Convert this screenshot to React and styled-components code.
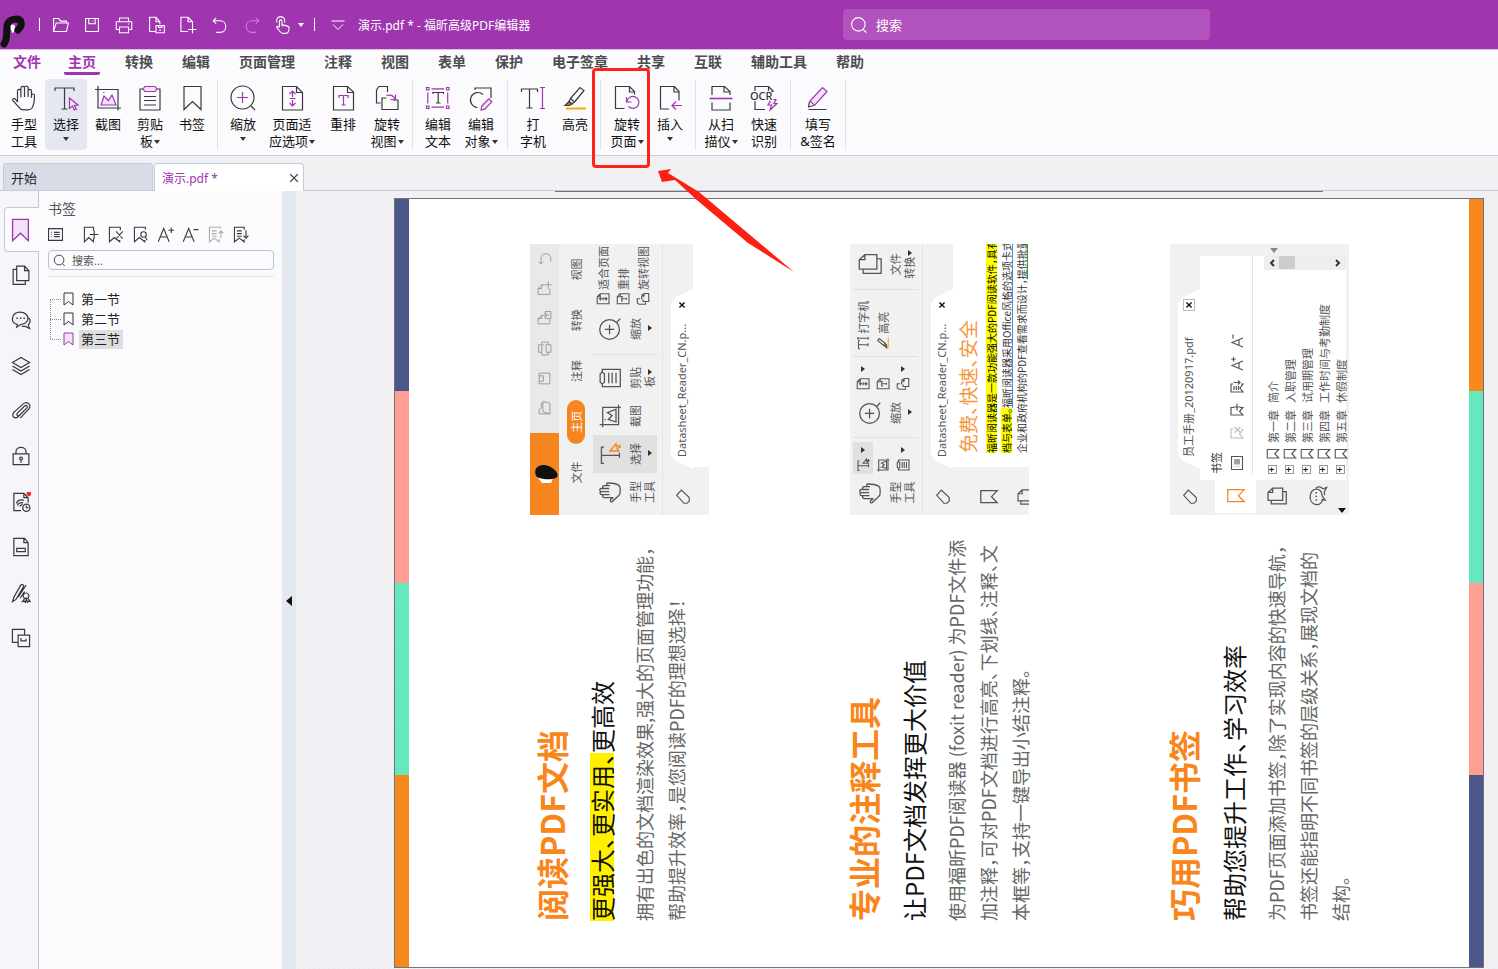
import React, { useState } from "react";
import styled, { createGlobalStyle, css } from "styled-components";

const PURPLE = "#a035b0";
const ORANGE = "#f6851f";

/* Drawings on a 28 x 28 grid. The "a" class takes the accent colour. */
const icons = {
  hand: (
    <path d="M7.5 18V7a1.7 1.7 0 0 1 3.4 0v6.5M10.9 13V4.2a1.8 1.8 0 0 1 3.6 0V13M14.5 13V3.8a1.8 1.8 0 0 1 3.6 0V13M18.1 7a1.7 1.7 0 0 1 3.4 0V14M21.5 11.500a1.500 1.500 0 0 1 3 0c0 5.500-.3 9-2.500 12.500-1 1.500-2 1.800-4 1.800h-4.500c-2 0-3.500-1-4.500-2.500L2.800 16.500c-.8-1.600 1-2.800 2.400-1.600L7.500 18" />
  ),
  select: (
    <>
      <path d="M3 7V4h19v3M12.500 4v21M9.500 25h6" />
      <path className="a f" d="M17.500 14l8.500 7-3.600.3 1.900 4-2 .8-1.800-4-3 2.400z" />
    </>
  ),
  shot: (
    <>
      <path d="M4 2v22h23M1 5.500h23v21" />
      <path className="a f" d="M7 21l3-9 4.500 4.500L18 11l4 10z" />
      <path className="a" d="M9 8.500h1.500" />
    </>
  ),
  clipboard: (
    <>
      <path d="M7 5H4v21h20V5h-3M8 12.500h12M8 16.500h12M8 21h12" />
      <path className="a f" d="M9 2.500h10l2 2.500-2 2.500H9L7 5z" />
    </>
  ),
  bookmark: <path d="M6 2.500h17v23l-8.500-8-8.500 8z" />,
  zoom: (
    <>
      <circle cx="13.500" cy="13.500" r="11.500" />
      <path d="M22 22l4 4" />
      <path className="a" d="M8 13.500h11M13.500 8v11" />
    </>
  ),
  fit: (
    <>
      <path d="M4.500 2.500h14l6 6v17.500h-20zM18.500 2.500v6h6" />
      <path className="a" d="M14.500 7v6M14.500 16v6M11.500 10l3-3 3 3M11.500 19l3 3 3-3M11.500 14.500h6" />
    </>
  ),
  reflow: (
    <>
      <path d="M4.500 2.500h14l6 5.500v18h-20zM18.500 2.500v6h6" />
      <path className="a" d="M10 14v-2.500h9V14M14.500 11.500V21M12.500 21h4" />
    </>
  ),
  rotateView: (
    <>
      <path d="M14.500 8V2.500H6L3.500 6v13h4M20 16h5v9.500H9V14h4.500" />
      <path className="a" d="M13.500 11.500c4-1 7 0 8.500 3.500M22.500 10.500v5h-5" />
    </>
  ),
  editText: (
    <>
      <path d="M9 10V8.500h10.500V10M14.200 8.500V19M12 19h4.500" />
      <path className="a" d="M2.500 3.500h2.500v2.500H2.500zM22.500 3.500H25v2.500h-2.500zM2.500 22H5v2.500H2.500zM22.500 22H25v2.500h-2.500zM7.500 4.800h12.500M7.500 23.200h12.500M3.800 8.500v11M23.700 8.500v11" />
    </>
  ),
  editObject: (
    <>
      <path d="M8 6V4h16v10M16 10.500a7.500 7.500 0 1 0-5.500 13" />
      <path className="a f" d="M14 26l.8-4 7-7.200 3 3-7 7.400z" />
    </>
  ),
  type: (
    <>
      <path d="M2.500 8V5h16v3M10.500 5v19M7.500 24h6" />
      <path className="a" d="M21 3.500h5M23.500 3.500v21M21 24.500h5" />
    </>
  ),
  highlight: (
    <>
      <path d="M9.500 14.500L19 3.500l4 3-9.500 11.500M9.500 14.500l4 3.500-2.500 2-3-2.500z" />
      <path d="M8 17.500l3 2.500-2.500 1.500H4z" fill="#b9822a" />
      <path d="M5 24.500h20" stroke="#f5a80f" strokeWidth="2" />
    </>
  ),
  rotatePage: (
    <>
      <path d="M11.500 24.500h-9V2.500h14L21.500 7.500v3M16.500 2.500V8h5" />
      <path className="a" d="M13.500 13v5h5M14 17.500a6 6 0 1 1 1.500 5" />
    </>
  ),
  insert: (
    <>
      <path d="M13 25H4.500V2.500h14L23 7.500v9M18 2.500V8h5" />
      <path className="a" d="M26 21.500H16M20 17.500l-4 4 4 4" />
    </>
  ),
  scan: (
    <>
      <path d="M5 11V2.500h12.500L23 7.500V11M17 2.500V8h6M5 18.500v7.500h18v-7.500" />
      <path className="a" d="M2.500 14.500h23" strokeWidth="1.600" />
    </>
  ),
  ocr: (
    <>
      <path d="M5 7V2.500h13.500l5 5M5 17v8.500h10M18.500 2.500V7.500h5" />
      <path className="a f" d="M21 15.500h5l-2 4h3l-7 6.500 1.500-5H18z" />
    </>
  ),
  sign: (
    <>
      <path d="M5.500 17.500L4.500 23l5-1.500M4.500 25.500h18" />
      <path className="a f" d="M6 17L18.500 3.500l4.500 4L10.500 21.500z" />
    </>
  ),
  open: <path d="M4 24V4h8l3 4h9v3M4 24l4-13h19l-3 13z" />,
  save: <path d="M4 4h20v20H4zM9 4v8h10V4M15 8h1" />,
  print: <path d="M7 9V3h14v6M7 21H2V9h24v12h-5M7 17h14v9H7zM20 12.500h2" />,
  saveAs: <path d="M14 24H4V2h10l6 7v4M14 2v7h6M14 15h13v11H14zM18 15v3h5v-3M19 22h3" />,
  create: <path d="M14 24H3V2h11l7 7v5M14 2v7h7M14 21h13M21 14v13" />,
  undo: <path d="M8 3L3.500 7.500 8 12M3.500 7.500H14c12 0 12 18 0 18H8" />,
  redo: <path d="M20 3l4.500 4.500L20 12M24.500 7.500H14c-12 0-12 18 0 18h6" />,
  touch: (
    <path d="M10 18V8a2 2 0 0 1 4 0v8c0-3 4-3 4 0 0-2 4-2 4 1 0-2 3-1 3 1 0 5-1 9-5 9h-5c-3 0-5-4-9-9-1-2 2-3 4 0M6 10a6.500 6.500 0 1 1 12 0" />
  ),
  more: <path d="M1 6h26M4 13l10 10 10-10" />,
  search: (
    <>
      <circle cx="13" cy="13" r="10.500" />
      <path d="M20.500 21l5 5" />
    </>
  ),
  close: <path d="M5 5l18 18M23 5L5 23" />,
  pages: <path d="M19 1.500H8V22h17V8zM19 1.500V8h6M8 6H3v21h17v-5" />,
  chat: (
    <>
      <path d="M13 3C-1 3-1 20 9 20l-1 4 6-4c14-1 12-17-1-17zM25 11c4 5 0 9-1 10l2 5-6-3h-5" />
      <path d="M7.500 11.500h2M12.500 11.500h2M17.500 11.500h2" strokeWidth="2.200" />
    </>
  ),
  layers: <path d="M14 2l12 7-12 7L2 9zM2 14l12 7 12-7M2 19l12 7 12-7" />,
  clip: (
    <path d="M8 18L19 7c3-2 5 1 3 3L10 22c-5 4-10-1-6-6L17 4c6-5 12 2 8 7L13 24M15 11l-6 6c-2 3 1 5 3 3l6-6" />
  ),
  lock: <path d="M3 11h22v15H3zM7 11V8c0-8 14-8 14 0v3M14 19.500v4M14 15.500a2 2 0 1 0 .1 0" />,
  secure: (
    <>
      <path d="M14 26H4V2h14l6 6v7M18 2v6h6M8 16c0-5 8-6 10-4M9 19c1-4 6-4 8-4M12 20l4-3" />
      <circle cx="21.500" cy="22" r="5" />
      <path d="M21.500 19v3h3" />
      <circle cx="25" cy="2.500" r="2.500" fill="#f22" stroke="#f22" />
    </>
  ),
  field: <path d="M4 2h15l5 6v18H4zM18 2v6h6M8 16h12v4.500H8z" />,
  stamp: (
    <path d="M2 26l2-6L13 4c2-4 6-1 4 2L7 23zM10 20L21 3M13 21l6-9M21 14a4 4 0 1 0 .1 0M19 22l-3 4 3-.5 1 2 1.500-5 1.500 5 1-2 3 .5-3-4" />
  ),
  compare: <path d="M10 20H2V2h17v8M10 10h16v16H10zM14 14v4h7v-3" />,
  list: <path d="M1 3h26v22H1zM11 10h11M11 14h11M11 18h11M6 10h1M6 14h1M6 18h1" />,
  bmAdd: <path d="M19 8V2H4v24l7-7 8 7v-6M13 14h14M20 7v14" />,
  bmDel: <path d="M22 7V2H4v24l8-7 9 7v-3M15 9l11 12M26 9L15 21" />,
  bmFind: (
    <>
      <path d="M22 6V2H4v24l8-7 9 7v-3" />
      <circle cx="19" cy="14" r="4.500" />
      <path d="M22 17.500l3 6" />
    </>
  ),
  bigger: <path d="M2 26L11 4l9 22M5 18h12M19 7h9M23.500 2.500v9" />,
  smaller: <path d="M2 26L11 4l9 22M5 18h12M19 6h8" />,
  bmUp: <path d="M22 4V2H4v24l8-6 8 6v-4M8 8h8M8 12.500h8M8 17h8M23 20V8M19 12l4-4 4 4" />,
  bmDown: <path d="M20 6V2H4v24l8-6 8 6v-4M8 8h8M8 12.500h8M8 17h8M23 7v13M19 16l4 4 4-4" />,
  eraser: <path d="M3 16L17 3l9 8-13 14H7l-4-4z" />,
};

const Icon = ({ name, size = 28, color = "#3a3a3e", accent = PURPLE, tint = "#f3e3f6", weight = 1.2 }) => (
  <Drawing viewBox="0 0 28 28" $size={size} $color={color} $accent={accent} $tint={tint} $weight={weight} aria-hidden="true">
    {icons[name]}
    {name === "ocr" && <OcrText x="0" y="16">OCR</OcrText>}
  </Drawing>
);

const quickTools = [
  ["open", "打开"],
  ["save", "保存"],
  ["print", "打印"],
  ["saveAs", "另存为"],
  ["create", "新建"],
  ["undo", "撤销"],
  ["redo", "重做"],
];

const menus = ["文件", "主页", "转换", "编辑", "页面管理", "注释", "视图", "表单", "保护", "电子签章", "共享", "互联", "辅助工具", "帮助"];

const ribbon = [
  [
    { icon: "hand", lines: ["手型", "工具"] },
    { icon: "select", lines: ["选择", ""], caret: true, active: true },
    { icon: "shot", lines: ["截图"] },
    { icon: "clipboard", lines: ["剪贴", "板"], caret: true },
    { icon: "bookmark", lines: ["书签"] },
  ],
  [
    { icon: "zoom", lines: ["缩放", ""], caret: true },
    { icon: "fit", lines: ["页面适", "应选项"], caret: true, width: 56 },
    { icon: "reflow", lines: ["重排"], width: 46 },
    { icon: "rotateView", lines: ["旋转", "视图"], caret: true },
  ],
  [
    { icon: "editText", lines: ["编辑", "文本"] },
    { icon: "editObject", lines: ["编辑", "对象"], caret: true, width: 44 },
  ],
  [
    { icon: "type", lines: ["打", "字机"] },
    { icon: "highlight", lines: ["高亮"] },
  ],
  [
    { icon: "rotatePage", lines: ["旋转", "页面"], caret: true, width: 44 },
    { icon: "insert", lines: ["插入", ""], caret: true },
  ],
  [
    { icon: "scan", lines: ["从扫", "描仪"], caret: true },
    { icon: "ocr", lines: ["快速", "识别"], width: 44 },
  ],
  [{ icon: "sign", lines: ["填写", "&签名"], width: 46 }],
];

const railTools = [
  ["pages", "页面"],
  ["chat", "注释"],
  ["layers", "图层"],
  ["clip", "附件"],
  ["lock", "安全"],
  ["secure", "数字签名"],
  ["field", "域"],
  ["stamp", "签章"],
  ["compare", "对比"],
];

const bookmarkTools = [
  ["bmAdd", "添加书签"],
  ["bmDel", "删除书签"],
  ["bmFind", "查找书签"],
  ["bigger", "放大字体"],
  ["smaller", "缩小字体"],
  ["bmUp", "上移"],
  ["bmDown", "下移"],
];

const chapters = ["第一节", "第二节", "第三节"];

const handbook = [
  ["第一章", "简介"],
  ["第二章", "入职管理"],
  ["第三章", "试用期管理"],
  ["第四章", "工作时间与考勤制度"],
  ["第五章", "休假制度"],
];

const TitleBar = () => (
  <Header>
    <Logo>
      <svg width="28" height="34" viewBox="0 0 28 34" aria-hidden="true">
        <path d="M10 11c2-2 5-2 5 1s-1 6-3 6z" fill="#fff" />
        <path d="M4 29C9 22 5 13 8 8c3-5 12-5 13-1 1 3-1 6-3 8" fill="none" stroke="#111" strokeWidth="7" strokeLinecap="round" />
      </svg>
    </Logo>
    <Bar />
    <QuickTools>
      {quickTools.map(([name, label]) => (
        <QuickButton key={name} aria-label={label} disabled={name === "redo"}>
          <Icon name={name} size={18} color="#fff" weight={1.7} />
        </QuickButton>
      ))}
      <QuickButton aria-label="触摸模式" $wide>
        <Icon name="touch" size={18} color="#fff" weight={1.7} />
        <Caret $color="#fff" />
      </QuickButton>
    </QuickTools>
    <Bar />
    <QuickButton aria-label="自定义工具栏">
      <Icon name="more" size={14} color="#fff" weight={2} />
    </QuickButton>
    <FileName>演示.pdf * - 福昕高级PDF编辑器</FileName>
    <TopSearch>
      <Icon name="search" size={18} color="#fff" weight={1.7} />
      <input aria-label="搜索" placeholder="搜索" />
    </TopSearch>
  </Header>
);

const Ribbon = () => (
  <Tools>
    {ribbon.map((group, index) => (
      <ToolGroup key={index}>
        {group.map(({ icon, lines, caret, active, width }) => (
          <Tool key={lines.join("")} $active={active} $width={width}>
            <Icon name={icon} />
            <ToolLabel>
              {lines.map((line, i) => (
                <span key={i}>
                  {line}
                  {caret && i === lines.length - 1 && <Caret $raised={!line} />}
                </span>
              ))}
            </ToolLabel>
          </Tool>
        ))}
      </ToolGroup>
    ))}
  </Tools>
);

const BookmarkPanel = () => {
  const [current, setCurrent] = useState("第三节");

  return (
    <Panel>
      <PanelTitle>书签</PanelTitle>
      <PanelTools>
        <PanelButton aria-label="选项" $first>
          <Icon name="list" size={15} weight={2} />
        </PanelButton>
        {bookmarkTools.map(([name, label]) => (
          <PanelButton key={name} aria-label={label} disabled={name === "bmUp"}>
            <Icon name={name} size={17} weight={1.8} />
          </PanelButton>
        ))}
      </PanelTools>
      <PanelSearch>
        <Icon name="search" size={13} weight={2} />
        <input aria-label="搜索书签" placeholder="搜索..." />
      </PanelSearch>
      <Tree>
        {chapters.map((chapter) => (
          <TreeRow key={chapter}>
            <Branch />
            <TreeItem $active={chapter === current} onClick={() => setCurrent(chapter)}>
              <TreeMark viewBox="0 0 12 15" $active={chapter === current}>
                <path d="M1 1h9v12L5.500 9.500 1 13z" />
              </TreeMark>
              <span>{chapter}</span>
            </TreeItem>
          </TreeRow>
        ))}
      </Tree>
    </Panel>
  );
};

const MiniIcon = (props) => <Icon accent="#555" tint="none" color="#555" weight={1.5} {...props} />;

const MiniTab = ({ children, boxed }) => (
  <MiniTabBar>
    <MiniCorner>
      <MiniIcon name="eraser" size={16} weight={2} />
    </MiniCorner>
    <MiniTabShape>
      <span>{children}</span>
      <MiniClose $boxed={boxed}>
        <MiniIcon name="close" size={8} color="#111" weight={5} />
      </MiniClose>
    </MiniTabShape>
  </MiniTabBar>
);

const RibbonPicture = () => (
  <Picture>
    <MiniTitle>
      <MiniBrand>
        <svg width="22" height="24" viewBox="0 0 22 24" aria-hidden="true">
          <path d="M3 8h6l6 12-5 3-7-6z" fill="#fff" />
          <path d="M12 2c8 3 11 15 8 19S7 17 3 10c-1-4 4-10 9-8z" fill="#111" />
        </svg>
      </MiniBrand>
      {["open", "save", "print", "saveAs", "create", "undo"].map((name) => (
        <MiniSlot key={name}>
          <MiniIcon name={name} size={15} color="#999" weight={1.8} />
        </MiniSlot>
      ))}
    </MiniTitle>
    <MiniMenu>
      {["文件", "主页", "注释", "转换", "视图"].map((name) => (
        <MiniMenuItem key={name} $active={name === "主页"}>
          <span>{name}</span>
        </MiniMenuItem>
      ))}
    </MiniMenu>
    <MiniRibbon>
      <MiniTool><MiniIcon name="hand" size={24} />手型<br />工具</MiniTool>
      <MiniTool $active><MiniIcon name="select" size={24} accent={ORANGE} />选择<br /><Caret /></MiniTool>
      <MiniTool><MiniIcon name="shot" size={24} />截图</MiniTool>
      <MiniTool><MiniIcon name="clipboard" size={24} />剪贴<br />板<Caret /></MiniTool>
      <MiniLine />
      <MiniTool $wide><MiniIcon name="zoom" size={24} />缩放<br /><Caret /></MiniTool>
      <MiniStack $width={60}>
        <span><MiniIcon name="fit" size={14} weight={2.2} />适合页面</span>
        <span><MiniIcon name="reflow" size={14} weight={2.2} />重排</span>
        <span><MiniIcon name="rotateView" size={14} weight={2.2} />旋转视图</span>
      </MiniStack>
    </MiniRibbon>
    <MiniTab>Datasheet_Reader_CN.p...</MiniTab>
    <MiniContent>
      <MiniSide />
      <MiniPage />
    </MiniContent>
  </Picture>
);

const NotePicture = () => (
  <Picture>
    <MiniRibbon $flush>
      <MiniTool><MiniIcon name="hand" size={24} />手型<br />工具</MiniTool>
      <MiniStack>
        <MiniChoice><MiniIcon name="select" size={14} weight={2.2} /><Caret /></MiniChoice>
        <span><MiniIcon name="shot" size={14} weight={2.2} /></span>
        <span><MiniIcon name="clipboard" size={14} weight={2.2} /><Caret /></span>
      </MiniStack>
      <MiniLine />
      <MiniTool $wide><MiniIcon name="zoom" size={24} />缩放<br /><Caret /></MiniTool>
      <MiniStack>
        <span><MiniIcon name="fit" size={14} weight={2.2} /><Caret /></span>
        <span><MiniIcon name="reflow" size={14} weight={2.2} /></span>
        <span><MiniIcon name="rotateView" size={14} weight={2.2} /><Caret /></span>
      </MiniStack>
      <MiniLine />
      <MiniStack $width={60}>
        <span><MiniIcon name="type" size={14} weight={2.2} />打字机</span>
        <span><MiniIcon name="highlight" size={14} weight={2.2} />高亮</span>
      </MiniStack>
      <MiniLine />
      <MiniTool $wide><MiniIcon name="pages" size={24} />文件<br />转换<Caret /></MiniTool>
    </MiniRibbon>
    <MiniTab>Datasheet_Reader_CN.p...</MiniTab>
    <MiniContent>
      <MiniSide>
        <MiniIcon name="bookmark" size={20} weight={1.8} />
        <MiniIcon name="pages" size={18} weight={1.8} />
      </MiniSide>
      <MiniPage>
        <MiniHeading>免费、快速、安全</MiniHeading>
        <MiniText><mark>福昕阅读器是一款功能强大的PDF阅读软件，具有</mark></MiniText>
        <MiniText><mark>档与表单。</mark><u>福昕阅读器采用Office风格的选项卡式</u></MiniText>
        <MiniText>企业和政府机构的PDF查看需求而设计，<ins>提供批量</ins></MiniText>
      </MiniPage>
    </MiniContent>
  </Picture>
);

const TreePicture = () => (
  <Picture>
    <MiniTab boxed>员工手册_20120917.pdf</MiniTab>
    <MiniBody>
      <MiniNav>
        <MiniNavItem $active><MiniIcon name="bookmark" size={20} color={ORANGE} weight={1.8} /></MiniNavItem>
        <MiniNavItem><MiniIcon name="pages" size={20} weight={1.8} /></MiniNavItem>
        <MiniNavItem><MiniIcon name="chat" size={20} weight={1.8} /></MiniNavItem>
        <Triangle $color="#111" />
      </MiniNav>
      <MiniTreePanel>
        <MiniTreeTitle>书签</MiniTreeTitle>
        <MiniTreeTools>
          <MiniIcon name="list" size={14} weight={2.2} />
          <MiniIcon name="bmDel" size={14} color="#bbb" weight={2.2} />
          <MiniIcon name="bmAdd" size={14} weight={2.4} />
          <MiniIcon name="bmDown" size={14} weight={2.4} />
          <MiniIcon name="bigger" size={14} weight={2.4} />
          <MiniIcon name="smaller" size={14} weight={2.4} />
        </MiniTreeTools>
        <MiniTreeBody>
          <div>
            {handbook.map(([number, title]) => (
              <MiniRow key={number}>
                <MiniPlus>+</MiniPlus>
                <MiniIcon name="bookmark" size={14} weight={2.2} />
                <span>{number}</span>
                <span>{title}</span>
              </MiniRow>
            ))}
          </div>
          <MiniScroll>
            <Chevron viewBox="0 0 8 8"><path d="M1 6l3-3 3 3" /></Chevron>
            <MiniThumb />
            <Chevron viewBox="0 0 8 8"><path d="M1 2l3 3 3-3" /></Chevron>
          </MiniScroll>
        </MiniTreeBody>
      </MiniTreePanel>
      <MiniGutter>
        <Triangle $color="#888" />
      </MiniGutter>
    </MiniBody>
  </Picture>
);

const Sheet = () => (
  <SheetFrame>
    <SheetPage>
      <Stripes>
        <Stripe $color="#f6881c" />
        <Stripe $color="#66e8bf" />
        <Stripe $color="#ff9e91" />
        <Stripe $color="#4b5787" />
      </Stripes>
      <Features>
        <Feature>
          <FeatureText $low>
            <h1>阅读PDF文档</h1>
            <h2><mark>更强大、更实用、</mark>更高效</h2>
            <p>拥有出色的文档渲染效果,强大的页面管理功能，<br />帮助提升效率，是您阅读PDF的理想选择！</p>
          </FeatureText>
          <RibbonPicture />
        </Feature>
        <Feature>
          <FeatureText>
            <h1>专业的注释工具</h1>
            <h2>让PDF文档发挥更大价值</h2>
            <p>使用福昕PDF阅读器 (foxit reader) 为PDF文件添<br />加注释，可对PDF文档进行高亮、下划线、注释、文<br />本框等，支持一键导出小结注释。</p>
          </FeatureText>
          <NotePicture />
        </Feature>
        <Feature>
          <FeatureText>
            <h1>巧用PDF书签</h1>
            <h2>帮助您提升工作、学习效率</h2>
            <p>为PDF页面添加书签，除了实现内容的快速导航，<br />书签还能指明不同书签的层级关系，展现文档的<br />结构。</p>
          </FeatureText>
          <TreePicture />
        </Feature>
      </Features>
      <Stripes>
        <Stripe $color="#4b5787" />
        <Stripe $color="#ff9e91" />
        <Stripe $color="#66e8bf" />
        <Stripe $color="#f6881c" />
      </Stripes>
    </SheetPage>
  </SheetFrame>
);

const App = () => {
  const [menu, setMenu] = useState("主页");

  return (
    <Window>
      <GlobalStyle />
      <TitleBar />
      <Menu>
        {menus.map((name) => (
          <MenuButton key={name} $active={name === menu} onClick={() => setMenu(name)}>
            {name}
          </MenuButton>
        ))}
      </Menu>
      <Ribbon />
      <Tabs>
        <Tab>开始</Tab>
        <ActiveTab>
          <TabName>演示.pdf *</TabName>
          <TabClose aria-label="关闭">
            <Icon name="close" size={12} weight={3} />
          </TabClose>
        </ActiveTab>
      </Tabs>
      <Workspace>
        <Rail>
          <RailCurrent aria-label="书签">
            <Icon name="bookmark" size={26} color={PURPLE} weight={1.4} />
          </RailCurrent>
          <RailList>
            {railTools.map(([name, label]) => (
              <RailButton key={name} aria-label={label}>
                <Icon name={name} size={20} weight={1.7} />
              </RailButton>
            ))}
          </RailList>
        </Rail>
        <BookmarkPanel />
        <Splitter aria-label="折叠面板" />
        <Viewer>
          <PreviousSheet />
          <Sheet />
        </Viewer>
      </Workspace>
      <MarkBox />
      <MarkArrow viewBox="0 0 140 106" aria-hidden="true">
        <path d="M1 2L14 0l-3 4 31 19 95 80-46-29-50-42L18 11 5 13z" fill="#ff1e12" />
      </MarkArrow>
    </Window>
  );
};

export default App;

const GlobalStyle = createGlobalStyle`
  * {
    box-sizing: border-box;
  }
  body {
    margin: 0;
    overflow: hidden;
    font-family: "Noto Sans", "Noto Sans CJK SC", sans-serif;
    font-size: 13px;
    color: #222;
  }
  button, input {
    font: inherit;
    color: inherit;
    border: 0;
    padding: 0;
    background: none;
  }
`;

const Window = styled.div`
  position: relative;
  display: flex;
  flex-direction: column;
  height: 100vh;
  background: #fbfbfe;
`;

const Drawing = styled.svg`
  width: ${({ $size }) => $size}px;
  height: ${({ $size }) => $size}px;
  flex: none;
  fill: none;
  stroke: ${({ $color }) => $color};
  stroke-width: ${({ $weight }) => $weight};
  .a {
    stroke: ${({ $accent }) => $accent};
  }
  .f {
    fill: ${({ $tint }) => $tint};
  }
`;

const OcrText = styled.text`
  font: 500 11px "Noto Sans", sans-serif;
  fill: #333;
  stroke: #fbfbfe;
  stroke-width: 2;
  paint-order: stroke;
`;

const Caret = styled.i`
  display: inline-block;
  border: 3px solid transparent;
  border-top: 4px solid ${({ $color }) => $color || "#333"};
  border-bottom: 0;
  margin-left: 1px;
  vertical-align: ${({ $raised }) => ($raised ? "5px" : "2px")};
`;

const Header = styled.header`
  display: flex;
  align-items: center;
  height: 50px;
  background: ${PURPLE};
  border-bottom: 1px solid #d9bfe2;
  color: #fff;
`;

const Logo = styled.div`
  display: flex;
  align-items: flex-end;
  width: 39px;
  height: 49px;
`;

const Bar = styled.span`
  width: 1px;
  height: 13px;
  background: #fff;
`;

const QuickTools = styled.div`
  display: flex;
  margin: 0 6px 0 4px;
`;

const QuickButton = styled.button`
  display: flex;
  align-items: center;
  justify-content: center;
  gap: 6px;
  width: ${({ $wide }) => ($wide ? 40 : 32)}px;
  height: 32px;
  &:disabled {
    opacity: 0.4;
  }
  ${Bar} + & {
    margin-left: 7px;
  }
`;

const FileName = styled.span`
  margin-left: 4px;
  font-size: 12px;
`;

const TopSearch = styled.label`
  display: flex;
  align-items: center;
  gap: 8px;
  width: 367px;
  height: 31px;
  margin: 0 288px 0 auto;
  padding: 0 7px;
  border-radius: 4px;
  background: #b252bd;
  input {
    flex: 1;
    outline: 0;
    &::placeholder {
      color: #fff;
      opacity: 1;
    }
  }
`;

const Menu = styled.nav`
  display: flex;
  gap: 21px;
  height: 29px;
  padding-left: 9px;
`;

const MenuButton = styled.button`
  height: 25px;
  padding: 0 4px;
  border-bottom: 3px solid transparent;
  border-radius: 2px;
  font-size: 14px;
  font-weight: 700;
  line-height: 24px;
  color: #4c4c50;
  &:first-child {
    margin-right: -2px;
    color: ${PURPLE};
  }
  ${({ $active }) =>
    $active &&
    css`
      border-bottom-color: ${PURPLE};
      color: ${PURPLE};
    `}
`;

const Tools = styled.div`
  display: flex;
  height: 77px;
  padding-left: 3px;
  border-bottom: 1px solid #c8ccdc;
`;

const ToolGroup = styled.div`
  display: flex;
  height: 71px;
  margin-right: 4px;
  padding-right: 4px;
  border-right: 1px solid #e2e4ec;
`;

const Tool = styled.button`
  display: flex;
  flex-direction: column;
  align-items: center;
  gap: 4px;
  width: ${({ $width }) => $width || 42}px;
  padding-top: 5px;
  border-radius: 4px;
  background: ${({ $active }) => ($active ? "#e5e8f1" : "none")};
`;

const ToolLabel = styled.span`
  line-height: 17px;
  white-space: nowrap;
  color: #111;
  span {
    display: block;
    height: 17px;
  }
`;

const Tabs = styled.div`
  display: flex;
  align-items: flex-end;
  gap: 1px;
  height: 35px;
  padding-left: 3px;
  border-bottom: 1px solid #c5cada;
  background: #f1f1f4;
`;

const Tab = styled.button`
  width: 150px;
  height: 27px;
  padding: 0 7px;
  border: 1px solid #c5cada;
  border-bottom: 0;
  border-radius: 4px 4px 0 0;
  background: #d8dce6;
  text-align: left;
`;

const ActiveTab = styled.div`
  display: flex;
  align-items: center;
  justify-content: space-between;
  width: 150px;
  height: 28px;
  margin-bottom: -1px;
  padding: 0 3px 0 7px;
  border: 1px solid #c5cada;
  border-bottom: 0;
  border-radius: 4px 4px 0 0;
  background: #fff;
`;

const TabName = styled.button`
  font-size: 12px;
  color: ${PURPLE};
`;

const TabClose = styled.button`
  display: flex;
`;

const Workspace = styled.div`
  display: flex;
  flex: 1;
  min-height: 0;
`;

const Rail = styled.nav`
  width: 39px;
  padding-top: 16px;
  background: #f5f5fa;
  border-right: 1px solid #c3c9d8;
`;

const RailCurrent = styled.button`
  display: flex;
  align-items: center;
  width: 35px;
  height: 45px;
  margin-left: 4px;
  padding-left: 2px;
  border: 1px solid #c3c9d8;
  border-right: 0;
  border-radius: 4px 0 0 4px;
  background: #fbfbfe;
  path {
    fill: #f3e3f6;
  }
`;

const RailList = styled.div`
  display: flex;
  flex-direction: column;
  height: 409px;
`;

const RailButton = styled.button`
  display: flex;
  flex: 1;
  align-items: center;
  justify-content: center;
  padding-left: 4px;
`;

const Panel = styled.aside`
  width: 243px;
  padding: 8px 8px 0 9px;
  background: #fbfbfe;
`;

const PanelTitle = styled.h2`
  margin: 0;
  font-size: 14px;
  font-weight: 400;
  line-height: 20px;
  color: #555;
`;

const PanelTools = styled.div`
  display: flex;
  height: 30px;
`;

const PanelButton = styled.button`
  display: flex;
  align-items: center;
  justify-content: ${({ $first }) => ($first ? "flex-start" : "center")};
  width: ${({ $first }) => ($first ? 30 : 25)}px;
  &:disabled {
    opacity: 0.4;
  }
`;

const PanelSearch = styled.label`
  display: flex;
  align-items: center;
  gap: 6px;
  height: 20px;
  margin-top: 1px;
  padding-left: 4px;
  border: 1px solid #b9c0d8;
  border-radius: 4px;
  font-size: 11px;
  input {
    outline: 0;
    &::placeholder {
      color: #555;
      opacity: 1;
    }
  }
`;

const Tree = styled.ul`
  margin: 6px 0 0;
  padding: 12px 0 0 2px;
  list-style: none;
  border-top: 1px solid #e3e4ea;
`;

const TreeRow = styled.li`
  display: flex;
  height: 20px;
`;

const Branch = styled.span`
  width: 11px;
  margin-top: 10px;
  border-top: 1px dotted #888;
  border-left: 1px dotted #888;
  li:not(:last-child) > & {
    height: 20px;
  }
  li:last-child > & {
    border-left-color: transparent;
  }
`;

const TreeItem = styled.button`
  display: flex;
  align-items: center;
  gap: 4px;
  padding-left: 2px;
  line-height: 19px;
  span {
    padding: 0 3px 0 2px;
    background: ${({ $active }) => ($active ? "#dedede" : "none")};
  }
`;

const TreeMark = styled.svg`
  width: 12px;
  height: 15px;
  margin-top: 1px;
  fill: ${({ $active }) => ($active ? "#f3e3f6" : "none")};
  stroke: ${({ $active }) => ($active ? PURPLE : "#333")};
`;

const Splitter = styled.button`
  display: flex;
  align-items: center;
  justify-content: center;
  width: 14px;
  padding-top: 42px;
  background: #e4e8f1;
  &::before {
    content: "";
    border: 5px solid transparent;
    border-right: 6px solid #111;
    border-left: 0;
  }
`;

const Viewer = styled.main`
  display: flex;
  flex: 1;
  flex-direction: column;
  align-items: center;
  min-width: 0;
  padding-left: 84px;
  overflow: hidden;
  background: radial-gradient(#ebedf2 1px, transparent 1px) 0 0 / 5px 5px, #f1f1f4;
`;

const PreviousSheet = styled.div`
  width: 768px;
  height: 1px;
  margin-bottom: 6px;
  background: #6f737b;
`;

/* The sheet is laid out upright and turned a quarter to the left. */
const SheetFrame = styled.div`
  display: grid;
  grid-template: 770px / 1090px;
  place-items: center;
  flex: none;
`;

const SheetPage = styled.article`
  display: flex;
  flex-direction: column;
  width: 770px;
  height: 1090px;
  border: 1px solid #6f737b;
  background: #fff;
  font-family: "Noto Sans CJK SC", sans-serif;
  transform: rotate(-90deg);
`;

const Stripes = styled.div`
  display: flex;
  flex: none;
  height: 14px;
`;

const Stripe = styled.span`
  flex: 1;
  background: ${({ $color }) => $color};
`;

const Features = styled.div`
  flex: 1;
  min-height: 0;
  padding: 121px 0 0 46px;
`;

const Feature = styled.section`
  display: flex;
  height: 320px;
`;

const FeatureText = styled.div`
  width: 406px;
  padding-top: ${({ $low }) => ($low ? 8 : 0)}px;
  white-space: nowrap;
  font-feature-settings: "halt";
  h1 {
    margin: 0;
    font-size: 32px;
    line-height: 26px;
    color: #f9861b;
  }
  h2 {
    margin: 22px 0 10px;
    font-size: 24px;
    font-weight: 400;
    line-height: 32px;
    color: #111;
  }
  mark {
    display: inline-block;
    line-height: 24px;
    color: inherit;
    background: #fff000;
  }
  p {
    margin: 0;
    font-size: 18px;
    line-height: 32px;
    color: #666;
  }
`;

const Picture = styled.div`
  display: flex;
  flex-direction: column;
  width: 271px;
  height: 179px;
  overflow: hidden;
  background: #f1f1f2;
  font-size: 11px;
  line-height: 14px;
  color: #555;
  white-space: nowrap;
`;

const MiniTitle = styled.div`
  display: flex;
  height: 29px;
  background: #e9e9e9;
`;

const MiniBrand = styled.div`
  display: flex;
  align-items: center;
  justify-content: center;
  width: 82px;
  margin-right: 9px;
  background: ${ORANGE};
  svg {
    transform: rotate(50deg);
  }
`;

const MiniSlot = styled.div`
  display: flex;
  align-items: center;
  justify-content: center;
  width: 30px;
`;

const MiniMenu = styled.div`
  display: flex;
  align-items: center;
  height: 34px;
  padding-left: 17px;
`;

const MiniMenuItem = styled.div`
  width: 52px;
  text-align: center;
  span {
    display: inline-block;
    padding: 2px 11px;
    border-radius: 9px;
    color: ${({ $active }) => ($active ? "#fff" : "#555")};
    background: ${({ $active }) => ($active ? ORANGE : "none")};
  }
`;

const MiniRibbon = styled.div`
  display: flex;
  height: ${({ $flush }) => ($flush ? 73 : 70)}px;
  padding: ${({ $flush }) => ($flush ? "3px 0 4px 4px" : "0 0 5px 4px")};
  border-bottom: 1px solid #e3e3e6;
`;

const MiniTool = styled.div`
  width: ${({ $wide }) => ($wide ? 42 : 38)}px;
  padding-top: 5px;
  text-align: center;
  background: ${({ $active }) => ($active ? "#e0e0e1" : "none")};
  svg {
    display: block;
    margin: 0 auto 6px;
  }
`;

const MiniLine = styled.span`
  width: 1px;
  margin: 0 4px;
  background: #e0e0e4;
`;

const MiniStack = styled.div`
  display: flex;
  flex-direction: column;
  width: ${({ $width }) => $width || 33}px;
  > span {
    display: flex;
    align-items: center;
    gap: 2px;
    height: 20px;
    padding-left: 2px;
  }
  ${Caret} {
    margin-left: 3px;
  }
`;

const MiniChoice = styled.span`
  background: #e0e0e1;
`;

const MiniTabBar = styled.div`
  display: flex;
  align-items: flex-end;
  height: 30px;
`;

const MiniCorner = styled.div`
  width: 46px;
  padding-left: 10px;
`;

const MiniTabShape = styled.div`
  display: flex;
  align-items: center;
  justify-content: space-between;
  width: 180px;
  height: 22px;
  padding: 0 10px 0 12px;
  background: #fff;
  clip-path: polygon(0 100%, 8px 5px, 14px 0, 166px 0, 172px 5px, 100% 100%);
  font-family: "Noto Sans", "Noto Sans CJK SC", sans-serif;
`;

const MiniClose = styled.span`
  display: flex;
  padding: 1px;
  border: 1px solid ${({ $boxed }) => ($boxed ? "#bbb" : "transparent")};
`;

const MiniContent = styled.div`
  display: flex;
  flex: 1;
  min-height: 0;
`;

const MiniSide = styled.div`
  display: flex;
  flex-direction: column;
  align-items: center;
  gap: 18px;
  width: 48px;
  padding: 26px 12px 0 0;
`;

const MiniPage = styled.div`
  flex: 1;
  min-width: 0;
  padding: 3px 0 0 14px;
  background: #fff;
  font-feature-settings: "halt";
`;

const MiniHeading = styled.div`
  margin-bottom: 4px;
  font-size: 19px;
  line-height: 24px;
  color: #f79640;
`;

const MiniText = styled.div`
  font-size: 10px;
  line-height: 15px;
  color: #333;
  mark {
    display: inline-block;
    line-height: 11px;
    background: #ff0;
  }
  u {
    text-decoration-color: #4a90e2;
  }
  ins {
    text-decoration-color: #2aa52a;
  }
`;

const MiniBody = styled.div`
  display: flex;
  height: 146px;
`;

const Triangle = styled.i`
  width: 5px;
  height: 8px;
  border: 4px solid transparent;
  border-right: 5px solid ${({ $color }) => $color};
  border-left: 0;
`;

const MiniNav = styled.div`
  display: flex;
  flex-direction: column;
  width: 35px;
  padding: 15px 0 0 2px;
`;

const MiniNavItem = styled.div`
  display: flex;
  align-items: center;
  justify-content: center;
  height: 41px;
  background: ${({ $active }) => ($active ? "#fff" : "none")};
`;

const MiniTreePanel = styled.div`
  display: flex;
  flex-direction: column;
  width: 224px;
  padding-left: 6px;
  background: #fff;
`;

const MiniTreeTitle = styled.div`
  padding: 9px 0 6px;
  color: #333;
`;

const MiniTreeTools = styled.div`
  display: flex;
  gap: 9px;
  padding: 1px 4px 8px;
  border-bottom: 1px solid #e3e3e6;
  svg:first-child {
    margin-right: 7px;
  }
`;

const MiniTreeBody = styled.div`
  display: flex;
  flex: 1;
  min-height: 0;
  justify-content: space-between;
  padding-top: 11px;
`;

const MiniRow = styled.div`
  display: flex;
  align-items: center;
  gap: 4px;
  height: 17px;
  line-height: 16px;
  span + span {
    margin-left: 3px;
  }
`;

const MiniPlus = styled.b`
  width: 9px;
  height: 9px;
  border: 1px solid #999;
  font-size: 9px;
  line-height: 6px;
  text-align: center;
  color: #111;
`;

const MiniScroll = styled.div`
  display: flex;
  flex-direction: column;
  align-items: center;
  width: 14px;
  padding: 4px 0;
  background: #eee;
`;

const Chevron = styled.svg`
  width: 8px;
  height: 8px;
  fill: none;
  stroke: #333;
  stroke-width: 2;
`;

const MiniThumb = styled.span`
  width: 13px;
  height: 16px;
  margin: 3px 0 auto;
  background: #ccc;
`;

const MiniGutter = styled.div`
  flex: 1;
  padding: 70px 0 0 3px;
  ${Triangle} {
    display: block;
  }
`;

const MarkBox = styled.div`
  position: absolute;
  top: 68px;
  left: 592px;
  width: 58px;
  height: 100px;
  border: 3px solid #ff2218;
  border-radius: 4px;
  pointer-events: none;
`;

const MarkArrow = styled.svg`
  position: absolute;
  top: 169px;
  left: 657px;
  width: 140px;
  height: 106px;
  pointer-events: none;
`;
